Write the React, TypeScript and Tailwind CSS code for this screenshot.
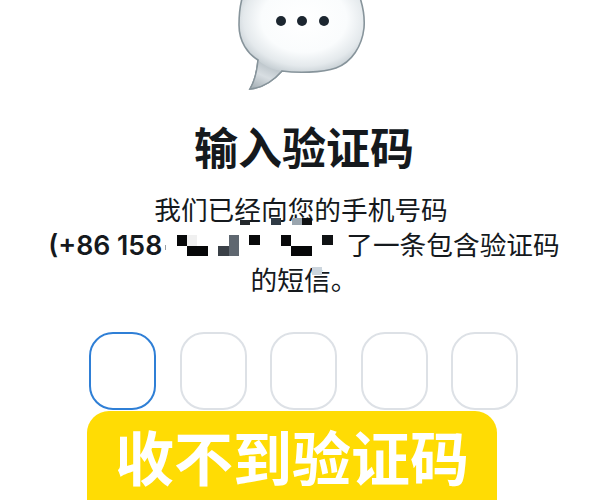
export default function App() {
  const blocks: [number, number, number, number, string][] = [
    [240, 220, 10, 5, "#23282c"],
    [271, 218, 10, 7, "#2f3a44"],
    [292, 218, 10, 7, "#9aa5ae"],
    [302, 218, 10, 7, "#101214"],
    [177, 235, 10, 11, "#08090a"],
    [187, 235, 10, 11, "#f0f0f0"],
    [187, 246, 21, 10, "#060708"],
    [218, 246, 11, 10, "#3a4047"],
    [229, 235, 10, 21, "#5f6770"],
    [249, 235, 11, 10, "#08090a"],
    [281, 235, 10, 11, "#08090a"],
    [291, 246, 21, 10, "#060708"],
    [322, 235, 11, 10, "#101214"],
    [312, 267, 10, 8, "#ccd5dd"],
    [165, 245, 1, 5, "#9aa0a6"],
  ];
  return (
    <div className="relative w-[608px] h-[500px] overflow-hidden bg-white flex flex-col items-center text-[#15191d] font-['Inter','Noto_Sans_CJK_SC',sans-serif]">
      <svg width="130" height="92" viewBox="0 0 130 92" className="shrink-0 ml-[-6px]">
        <defs>
          <radialGradient id="b" cx="0.52" cy="0.28" r="0.62">
            <stop offset="0" stopColor="#ffffff" />
            <stop offset="0.55" stopColor="#fafcfd" />
            <stop offset="0.78" stopColor="#e4e9ec" />
            <stop offset="1" stopColor="#b6c0c6" />
          </radialGradient>
          <linearGradient id="t" x1="0.7" y1="0" x2="0.2" y2="1">
            <stop offset="0" stopColor="#aeb8be" />
            <stop offset="0.55" stopColor="#d8dee2" />
            <stop offset="1" stopColor="#a8b2b8" />
          </linearGradient>
        </defs>
        <path d="M8 -8 C4 3 3 14 3 25 C3 42 12 54 22 60 C21 72 18 82 14 89 C27 88 38 80 46 71 C60 73 86 73 100 68 C116 62 126 46 128 28 C129 16 127 5 122 -8 Z" fill="url(#b)" stroke="#87949b" strokeWidth="1.6" />
        <path d="M22 60 C21 72 18 82 14 89 C27 88 38 80 46 71 C37 70 28 66 22 60 Z" fill="url(#t)" />
        <path d="M22 60 C21 72 18 82 14 89 C27 88 38 80 46 71" fill="none" stroke="#87949b" strokeWidth="1.4" />
        <circle cx="45" cy="21" r="5" fill="#1c2630" />
        <circle cx="66" cy="21" r="5" fill="#1c2630" />
        <circle cx="88" cy="21" r="5" fill="#1c2630" />
      </svg>
      <h1 className="mt-[27px] text-[44px] leading-[60px] font-bold">输入验证码</h1>
      <div className="mt-[14px] text-[26.7px] leading-[35px] text-center whitespace-nowrap font-normal">
        <div className="mr-[6px]">我们已经向您的手机号码</div>
        <div className="flex items-center justify-center">
          <span className="font-semibold">(+86 158</span>
          <span className="inline-block w-[184px]" />
          <span>了一条包含验证码</span>
        </div>
        <div>的短信。</div>
      </div>
      <div className="mt-[34px] ml-[-1px] flex gap-[23.5px]">
        <div className="w-[67px] h-[78px] rounded-[24px] border-2 border-[#2f7fd6] bg-white" />
        <div className="w-[67px] h-[78px] rounded-[24px] border-2 border-[#dde1e6] bg-white" />
        <div className="w-[67px] h-[78px] rounded-[24px] border-2 border-[#dde1e6] bg-white" />
        <div className="w-[67px] h-[78px] rounded-[24px] border-2 border-[#dde1e6] bg-white" />
        <div className="w-[67px] h-[78px] rounded-[24px] border-2 border-[#dde1e6] bg-white" />
      </div>
      <div className="mt-px ml-[-24px] w-[410px] h-[110px] shrink-0 rounded-[22px] bg-[#ffdc04] flex justify-center pt-[14px]">
        <span className="text-[59px] leading-[70px] font-bold text-white whitespace-nowrap">收不到验证码</span>
      </div>
      {blocks.map(([x, y, w, h, c], i) => (
        <div key={i} className="absolute" style={{ left: x, top: y, width: w, height: h, background: c }} />
      ))}
    </div>
  );
}
